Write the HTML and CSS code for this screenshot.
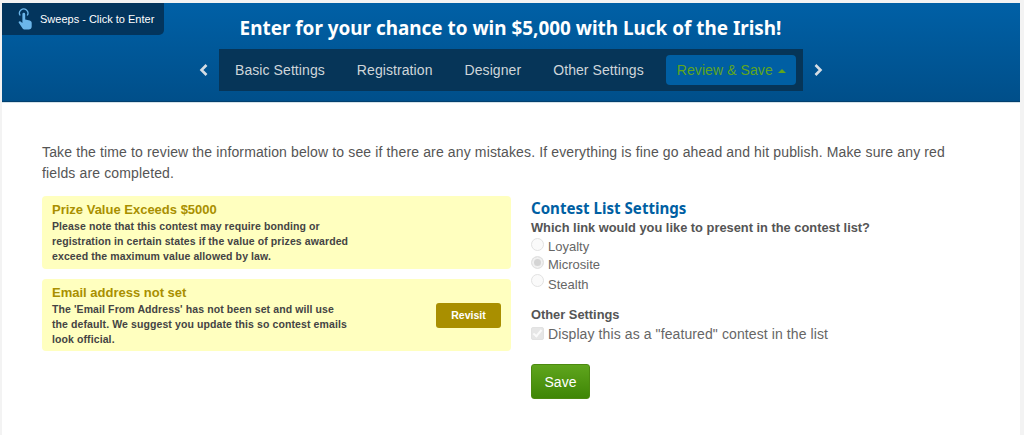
FILE: index.html
```html
<!DOCTYPE html>
<html>
<head>
  <link rel="stylesheet" href="styles.css">
</head>
<body>
  <div id="page">
    <div id="header">
      <a id="sweepsTab" href="#">
        <svg class="tab-icon" width="14" height="22" viewBox="0 0 14 22">
          <path d="M2.2 7.5a4.2 4.2 0 1 1 7 0" fill="none" stroke="#6cb6ea" stroke-width="1.3"/>
          <path d="M4.4 6.2a1.4 1.4 0 0 1 2.8 0v5.2l4.6 1.2c1.2.4 1.9 1.2 1.9 2.4v3.4c0 1.8-1.2 3-3 3H7c-1.2 0-2-.5-2.7-1.5L.8 14.800c-.6-1 .6-2.200 1.700-1.400l1.900 1.500z" fill="#6cb6ea"/>
        </svg>
        <span>Sweeps - Click to Enter</span>
      </a>
      <div id="title">Enter for your chance to win $5,000 with Luck of the Irish!</div>
      <div id="navRow">
        <svg class="chevron" width="10" height="14" viewBox="0 0 10 14"><path d="M7.500 2 2.500 7l5 5" fill="none" stroke="#d5dde4" stroke-width="2.600"/></svg>
        <div id="navTabs">
          <a class="nav-item" href="#">Basic Settings</a>
          <a class="nav-item" href="#">Registration</a>
          <a class="nav-item" href="#">Designer</a>
          <a class="nav-item" href="#">Other Settings</a>
          <a class="nav-item active" href="#">Review &amp; Save <span class="caret"></span></a>
        </div>
        <svg class="chevron" width="10" height="14" viewBox="0 0 10 14"><path d="M2.500 2l5 5-5 5" fill="none" stroke="#d5dde4" stroke-width="2.600"/></svg>
      </div>
    </div>

    <div id="content">
      <p id="intro">Take the time to review the information below to see if there are any mistakes. If everything is fine go ahead and hit publish. Make sure any red fields are completed.</p>

      <div id="columns">
        <div id="alerts">
          <div class="alert">
            <div class="alert-text">
              <div class="alert-title">Prize Value Exceeds $5000</div>
              <div class="alert-body">Please note that this contest may require bonding or registration in certain states if the value of prizes awarded exceed the maximum value allowed by law.</div>
            </div>
          </div>
          <div class="alert">
            <div class="alert-text">
              <div class="alert-title">Email address not set</div>
              <div class="alert-body">The 'Email From Address' has not been set and will use the default. We suggest you update this so contest emails look official.</div>
            </div>
            <button type="button" class="revisit">Revisit</button>
          </div>
        </div>

        <form id="settings">
          <div id="settingsTitle">Contest List Settings</div>
          <div class="question">Which link would you like to present in the contest list?</div>
          <label class="option"><input type="radio" name="link" disabled>Loyalty</label>
          <label class="option"><input type="radio" name="link" checked disabled>Microsite</label>
          <label class="option stealth"><input type="radio" name="link" disabled>Stealth</label>
          <div class="question other">Other Settings</div>
          <label class="option featured"><input type="checkbox" checked disabled>Display this as a "featured" contest in the list</label>
          <button type="button" id="saveButton">Save</button>
        </form>
      </div>
    </div>
  </div>
</body>
</html>
```

FILE: styles.css
```css
html, body {
  margin: 0;
  height: 100%;
  overflow: hidden;
}
body {
  font-family: "Liberation Sans", Arial, sans-serif;
  background-color: #f3f3f3;
  color: #555;
}
a {
  text-decoration: none;
}
#page {
  margin: 3px 4px 0 2px;
  background-color: #ffffff;
  height: 432px;
}
#header {
  position: relative;
  height: 99px;
  box-sizing: border-box;
  padding-top: 13px;
  background: linear-gradient(to bottom, #0060a6, #004f8a);
  border-bottom: 1px solid #03406e;
  box-shadow: 0 1px 0 #d5e3ea;
}
#sweepsTab {
  position: absolute;
  top: 0;
  left: 0;
  width: 162px;
  height: 32px;
  box-sizing: border-box;
  padding: 5px 0 0 16px;
  display: flex;
  gap: 8px;
  background-color: #03355d;
  border-bottom-right-radius: 5px;
  color: #ffffff;
  font-size: 11px;
}
.tab-icon {
  flex: none;
}
#sweepsTab span {
  margin-top: 5px;
}
#title {
  padding-right: 1px;
  text-align: center;
  color: #ffffff;
  font-family: "Noto Sans", sans-serif;
  font-weight: bold;
  font-size: 18.900px;
  line-height: 25px;
}
#navRow {
  margin-top: 8px;
  display: flex;
  justify-content: center;
  align-items: center;
  gap: 10px;
}
#navTabs {
  flex: none;
  width: 584px;
  height: 42px;
  box-sizing: border-box;
  display: flex;
  align-items: center;
  background-color: #063558;
}
.nav-item {
  flex: none;
  padding: 0 16px;
  color: #cfd5da;
  font-size: 14px;
  letter-spacing: 0.08px;
  white-space: nowrap;
}
.nav-item.active {
  margin-left: 6px;
  padding: 0 10px 0 11px;
  height: 30px;
  line-height: 30px;
  border-radius: 4px;
  background-color: #005fa3;
  color: #5fa51d;
}
.caret {
  display: inline-block;
  margin-left: 1px;
  vertical-align: 2px;
  border: 4px solid transparent;
  border-top: 0;
  border-bottom-color: #5fa51d;
}
#content {
  padding: 40px 0 0 40px;
}
#intro {
  margin: 0;
  width: 912px;
  font-size: 14px;
  line-height: 21px;
  letter-spacing: 0.136px;
}
#columns {
  margin-top: 12px;
  display: flex;
  gap: 20px;
}
#alerts {
  width: 469px;
  display: flex;
  flex-direction: column;
  gap: 10px;
}
.alert {
  display: flex;
  justify-content: space-between;
  align-items: center;
  box-sizing: border-box;
  height: 73px;
  padding: 6px 10px 0;
  background-color: #ffffbf;
  border-radius: 4px;
}
.alert + .alert {
  height: 72px;
}
.alert-text {
  width: 298px;
  align-self: flex-start;
}
.alert-title {
  color: #a98f00;
  font-size: 13px;
  font-weight: bold;
  line-height: 15px;
  white-space: nowrap;
}
.alert-body {
  margin-top: 2px;
  color: #444;
  font-size: 10.500px;
  font-weight: bold;
  line-height: 15px;
  letter-spacing: 0.1px;
}
.revisit {
  width: 65px;
  height: 25px;
  margin-top: -6px;
  padding: 0;
  border: none;
  border-radius: 3px;
  background-color: #a98f00;
  color: #ffffff;
  font-family: inherit;
  font-size: 10.500px;
  font-weight: bold;
}
#settingsTitle {
  margin-top: 3px;
  color: #005fa3;
  font-family: "Noto Sans", sans-serif;
  font-size: 15.100px;
  font-weight: bold;
  line-height: 18px;
}
.question {
  margin-top: 2px;
  font-size: 12.850px;
  font-weight: bold;
  line-height: 18px;
}
.question.other {
  margin-top: 13px;
}
.option {
  display: flex;
  align-items: center;
  height: 18px;
  font-size: 13px;
  color: #666;
}
.option.stealth {
  margin-top: 2px;
}
.option.featured {
  height: 20px;
  font-size: 14px;
  letter-spacing: 0.1px;
}
.option input {
  appearance: none;
  margin: 0 4px 0 0;
  width: 13px;
  height: 13px;
  flex: none;
  position: relative;
  top: -1.500px;
  box-sizing: border-box;
  border: 1px solid #e2e2e2;
  border-radius: 50%;
  background-color: #fafafa;
}
.option.stealth input {
  top: -4px;
}
.option input:checked {
  background-color: #d4d4d4;
  box-shadow: inset 0 0 0 2px #f0f0f0;
}
.option input[type="checkbox"] {
  border-radius: 2px;
  background-color: #e6e6e6;
  box-shadow: none;
  top: -1px;
}
.option input[type="checkbox"]::after {
  content: "";
  position: absolute;
  left: 3px;
  top: 0;
  width: 3px;
  height: 7px;
  border: solid #fafafa;
  border-width: 0 2px 2px 0;
  transform: rotate(40deg);
}
#saveButton {
  display: block;
  margin-top: 20px;
  width: 59px;
  height: 35px;
  padding: 0;
  border: 1px solid #4c8a10;
  border-radius: 3px;
  background: linear-gradient(to bottom, #5fa51d, #3f8606);
  color: #ffffff;
  font-family: inherit;
  font-size: 14px;
}
```
